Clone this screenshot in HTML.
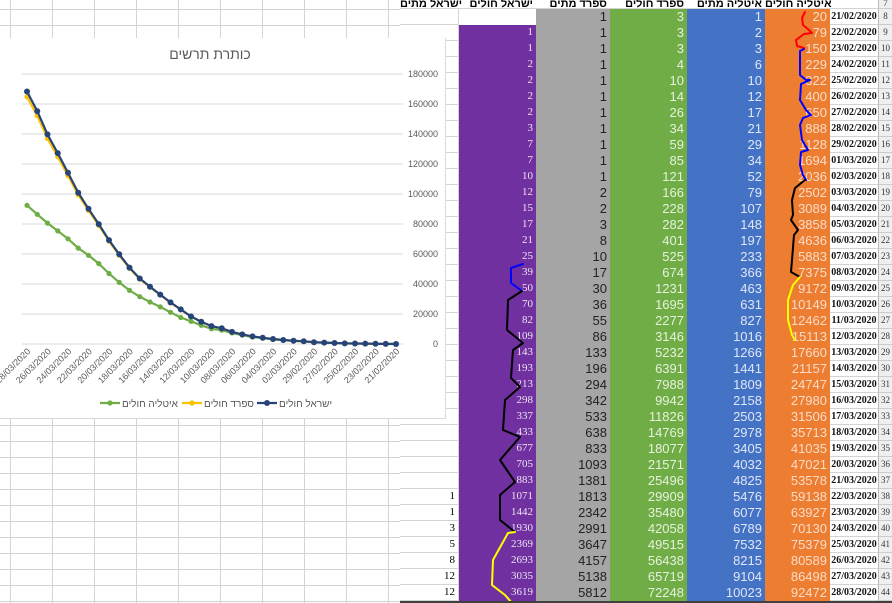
<!DOCTYPE html>
<html><head><meta charset="utf-8"><style>
html,body{margin:0;width:892px;height:603px;overflow:hidden}
body{background:#fff;position:relative;font-family:"Liberation Sans",sans-serif}
.bg{position:absolute;left:0;top:0;width:400px;height:603px;
background-image:linear-gradient(#d4d4d4 1px,transparent 1px),linear-gradient(90deg,#d4d4d4 1px,transparent 1px);
background-size:42px 16px,42px 16px;background-position:0 9px,10px 0}
table{position:absolute;left:400px;top:-7px;border-collapse:separate;border-spacing:0;table-layout:fixed;width:492px}
tr{height:16px}
td{height:16px;max-height:16px;padding:0 3px 0 0;text-align:right;white-space:nowrap;overflow:hidden;line-height:15px;box-sizing:border-box;border-bottom:1px solid transparent}
.h td{background:#fff;border-bottom:1px solid #d4d4d4}
.hd{position:absolute;top:-1px;height:10px;font-size:11px;font-weight:bold;line-height:11px;text-align:right;white-space:nowrap;color:#000;box-sizing:border-box;padding-right:3px}
td.d{font-family:"Liberation Serif",serif;font-size:11px;border-bottom:1px solid #d4d4d4;border-right:1px solid #d4d4d4}
td.p{background:#7030a0;color:#eee4f5;font-family:"Liberation Serif",serif;font-size:11px;border-bottom-color:#7030a0}
td.g{background:#a5a5a5;color:#222;font-size:13px;border-bottom-color:#a5a5a5}
td.gr{background:#70ad47;color:#e6f2dc;font-size:13px;border-bottom-color:#70ad47}
td.b{background:#4472c4;color:#dfe7f6;font-size:13px;border-bottom-color:#4472c4}
td.o{background:#ed7d31;color:#fbdcc6;font-size:13px;border-bottom-color:#ed7d31}
td.dt{font-family:"Liberation Serif",serif;font-size:10px;font-weight:bold;color:#111;text-align:center;padding:0;border-bottom:1px solid #d4d4d4}
td.r{background:#efefef;font-family:"Liberation Serif",serif;font-size:9px;color:#333;text-align:center;padding:0;border-bottom:1px solid #ccc;border-left:1px solid #bbb}
td.e{background:#fff}
.chart{position:absolute;left:0;top:38px;width:445px;height:380px;background:#fff;border-right:1px solid #d9d9d9;border-bottom:1px solid #d9d9d9}
svg{position:absolute;left:0;top:0}
</style></head><body>
<div class="bg"></div>
<table>
<colgroup><col style="width:59px"><col style="width:77px"><col style="width:74px"><col style="width:77px"><col style="width:78px"><col style="width:65px"><col style="width:48px"><col style="width:14px"></colgroup>
<tr class="h"><td></td><td></td><td></td><td></td><td></td><td></td><td></td><td class="r" style="vertical-align:bottom;line-height:9px">7</td></tr>
<tr><td class="d"></td><td class="e"></td><td class="g">1</td><td class="gr">3</td><td class="b">1</td><td class="o">20</td><td class="dt">21/02/2020</td><td class="r">8</td></tr>
<tr><td class="d"></td><td class="p">1</td><td class="g">1</td><td class="gr">3</td><td class="b">2</td><td class="o">79</td><td class="dt">22/02/2020</td><td class="r">9</td></tr>
<tr><td class="d"></td><td class="p">1</td><td class="g">1</td><td class="gr">3</td><td class="b">3</td><td class="o">150</td><td class="dt">23/02/2020</td><td class="r">10</td></tr>
<tr><td class="d"></td><td class="p">2</td><td class="g">1</td><td class="gr">4</td><td class="b">6</td><td class="o">229</td><td class="dt">24/02/2020</td><td class="r">11</td></tr>
<tr><td class="d"></td><td class="p">2</td><td class="g">1</td><td class="gr">10</td><td class="b">10</td><td class="o">322</td><td class="dt">25/02/2020</td><td class="r">12</td></tr>
<tr><td class="d"></td><td class="p">2</td><td class="g">1</td><td class="gr">14</td><td class="b">12</td><td class="o">400</td><td class="dt">26/02/2020</td><td class="r">13</td></tr>
<tr><td class="d"></td><td class="p">2</td><td class="g">1</td><td class="gr">26</td><td class="b">17</td><td class="o">650</td><td class="dt">27/02/2020</td><td class="r">14</td></tr>
<tr><td class="d"></td><td class="p">3</td><td class="g">1</td><td class="gr">34</td><td class="b">21</td><td class="o">888</td><td class="dt">28/02/2020</td><td class="r">15</td></tr>
<tr><td class="d"></td><td class="p">7</td><td class="g">1</td><td class="gr">59</td><td class="b">29</td><td class="o">1128</td><td class="dt">29/02/2020</td><td class="r">16</td></tr>
<tr><td class="d"></td><td class="p">7</td><td class="g">1</td><td class="gr">85</td><td class="b">34</td><td class="o">1694</td><td class="dt">01/03/2020</td><td class="r">17</td></tr>
<tr><td class="d"></td><td class="p">10</td><td class="g">1</td><td class="gr">121</td><td class="b">52</td><td class="o">2036</td><td class="dt">02/03/2020</td><td class="r">18</td></tr>
<tr><td class="d"></td><td class="p">12</td><td class="g">2</td><td class="gr">166</td><td class="b">79</td><td class="o">2502</td><td class="dt">03/03/2020</td><td class="r">19</td></tr>
<tr><td class="d"></td><td class="p">15</td><td class="g">2</td><td class="gr">228</td><td class="b">107</td><td class="o">3089</td><td class="dt">04/03/2020</td><td class="r">20</td></tr>
<tr><td class="d"></td><td class="p">17</td><td class="g">3</td><td class="gr">282</td><td class="b">148</td><td class="o">3858</td><td class="dt">05/03/2020</td><td class="r">21</td></tr>
<tr><td class="d"></td><td class="p">21</td><td class="g">8</td><td class="gr">401</td><td class="b">197</td><td class="o">4636</td><td class="dt">06/03/2020</td><td class="r">22</td></tr>
<tr><td class="d"></td><td class="p">25</td><td class="g">10</td><td class="gr">525</td><td class="b">233</td><td class="o">5883</td><td class="dt">07/03/2020</td><td class="r">23</td></tr>
<tr><td class="d"></td><td class="p">39</td><td class="g">17</td><td class="gr">674</td><td class="b">366</td><td class="o">7375</td><td class="dt">08/03/2020</td><td class="r">24</td></tr>
<tr><td class="d"></td><td class="p">50</td><td class="g">30</td><td class="gr">1231</td><td class="b">463</td><td class="o">9172</td><td class="dt">09/03/2020</td><td class="r">25</td></tr>
<tr><td class="d"></td><td class="p">70</td><td class="g">36</td><td class="gr">1695</td><td class="b">631</td><td class="o">10149</td><td class="dt">10/03/2020</td><td class="r">26</td></tr>
<tr><td class="d"></td><td class="p">82</td><td class="g">55</td><td class="gr">2277</td><td class="b">827</td><td class="o">12462</td><td class="dt">11/03/2020</td><td class="r">27</td></tr>
<tr><td class="d"></td><td class="p">109</td><td class="g">86</td><td class="gr">3146</td><td class="b">1016</td><td class="o">15113</td><td class="dt">12/03/2020</td><td class="r">28</td></tr>
<tr><td class="d"></td><td class="p">143</td><td class="g">133</td><td class="gr">5232</td><td class="b">1266</td><td class="o">17660</td><td class="dt">13/03/2020</td><td class="r">29</td></tr>
<tr><td class="d"></td><td class="p">193</td><td class="g">196</td><td class="gr">6391</td><td class="b">1441</td><td class="o">21157</td><td class="dt">14/03/2020</td><td class="r">30</td></tr>
<tr><td class="d"></td><td class="p">213</td><td class="g">294</td><td class="gr">7988</td><td class="b">1809</td><td class="o">24747</td><td class="dt">15/03/2020</td><td class="r">31</td></tr>
<tr><td class="d"></td><td class="p">298</td><td class="g">342</td><td class="gr">9942</td><td class="b">2158</td><td class="o">27980</td><td class="dt">16/03/2020</td><td class="r">32</td></tr>
<tr><td class="d"></td><td class="p">337</td><td class="g">533</td><td class="gr">11826</td><td class="b">2503</td><td class="o">31506</td><td class="dt">17/03/2020</td><td class="r">33</td></tr>
<tr><td class="d"></td><td class="p">433</td><td class="g">638</td><td class="gr">14769</td><td class="b">2978</td><td class="o">35713</td><td class="dt">18/03/2020</td><td class="r">34</td></tr>
<tr><td class="d"></td><td class="p">677</td><td class="g">833</td><td class="gr">18077</td><td class="b">3405</td><td class="o">41035</td><td class="dt">19/03/2020</td><td class="r">35</td></tr>
<tr><td class="d"></td><td class="p">705</td><td class="g">1093</td><td class="gr">21571</td><td class="b">4032</td><td class="o">47021</td><td class="dt">20/03/2020</td><td class="r">36</td></tr>
<tr><td class="d"></td><td class="p">883</td><td class="g">1381</td><td class="gr">25496</td><td class="b">4825</td><td class="o">53578</td><td class="dt">21/03/2020</td><td class="r">37</td></tr>
<tr><td class="d">1</td><td class="p">1071</td><td class="g">1813</td><td class="gr">29909</td><td class="b">5476</td><td class="o">59138</td><td class="dt">22/03/2020</td><td class="r">38</td></tr>
<tr><td class="d">1</td><td class="p">1442</td><td class="g">2342</td><td class="gr">35480</td><td class="b">6077</td><td class="o">63927</td><td class="dt">23/03/2020</td><td class="r">39</td></tr>
<tr><td class="d">3</td><td class="p">1930</td><td class="g">2991</td><td class="gr">42058</td><td class="b">6789</td><td class="o">70130</td><td class="dt">24/03/2020</td><td class="r">40</td></tr>
<tr><td class="d">5</td><td class="p">2369</td><td class="g">3647</td><td class="gr">49515</td><td class="b">7532</td><td class="o">75379</td><td class="dt">25/03/2020</td><td class="r">41</td></tr>
<tr><td class="d">8</td><td class="p">2693</td><td class="g">4157</td><td class="gr">56438</td><td class="b">8215</td><td class="o">80589</td><td class="dt">26/03/2020</td><td class="r">42</td></tr>
<tr><td class="d">12</td><td class="p">3035</td><td class="g">5138</td><td class="gr">65719</td><td class="b">9104</td><td class="o">86498</td><td class="dt">27/03/2020</td><td class="r">43</td></tr>
<tr><td class="d">12</td><td class="p">3619</td><td class="g">5812</td><td class="gr">72248</td><td class="b">10023</td><td class="o">92472</td><td class="dt">28/03/2020</td><td class="r">44</td></tr>
</table>
<div class="hd" style="left:400px;width:59px">ישראל מתים</div>
<div class="hd" style="left:459px;width:77px">ישראל חולים</div>
<div class="hd" style="left:536px;width:74px">ספרד מתים</div>
<div class="hd" style="left:610px;width:77px">ספרד חולים</div>
<div class="hd" style="left:687px;width:78px">איטליה מתים</div>
<div class="hd" style="left:765px;width:65px">איטליה חולים</div>
<div class="chart"></div>
<svg width="892" height="603" viewBox="0 0 892 603">
<defs>
<marker id="mg" markerWidth="6" markerHeight="6" refX="3" refY="3" markerUnits="userSpaceOnUse"><circle cx="3" cy="3" r="2.6" fill="#70ad47"/></marker>
<marker id="my" markerWidth="6" markerHeight="6" refX="3" refY="3" markerUnits="userSpaceOnUse"><circle cx="3" cy="3" r="2.6" fill="#ffc000"/></marker>
<marker id="md" markerWidth="7" markerHeight="7" refX="3.5" refY="3.5" markerUnits="userSpaceOnUse"><circle cx="3.5" cy="3.5" r="3" fill="#264478"/></marker>
</defs>
<g stroke="#d9d9d9" stroke-width="1">
<line x1="22" x2="403" y1="74" y2="74"/><line x1="22" x2="403" y1="104" y2="104"/><line x1="22" x2="403" y1="134" y2="134"/><line x1="22" x2="403" y1="164" y2="164"/><line x1="22" x2="403" y1="194" y2="194"/><line x1="22" x2="403" y1="224" y2="224"/><line x1="22" x2="403" y1="254" y2="254"/><line x1="22" x2="403" y1="284" y2="284"/><line x1="22" x2="403" y1="314" y2="314"/><line x1="22" x2="403" y1="344" y2="344"/>
</g>
<g font-family="Liberation Sans" font-size="9" fill="#595959" text-anchor="end">
<text x="438" y="77">180000</text><text x="438" y="107">160000</text><text x="438" y="137">140000</text><text x="438" y="167">120000</text><text x="438" y="197">100000</text><text x="438" y="227">80000</text><text x="438" y="257">60000</text><text x="438" y="287">40000</text><text x="438" y="317">20000</text><text x="438" y="347">0</text>
</g>
<text x="210" y="59" font-family="Liberation Sans" font-size="14" fill="#595959" text-anchor="middle">כותרת תרשים</text>
<polyline fill="none" stroke="#70ad47" stroke-width="2.2" marker-start="url(#mg)" marker-mid="url(#mg)" marker-end="url(#mg)" points="27,205.3 37.25,214.3 47.5,223.1 57.75,230.9 68,238.8 78.25,248.1 88.5,255.3 98.75,263.6 109,273.5 119.25,282.4 129.5,290.4 139.75,296.7 150,302 160.25,306.9 170.5,312.3 180.75,317.5 191,321.3 201.25,325.3 211.5,328.8 221.75,330.2 232,332.9 242.25,335.2 252.5,337 262.75,338.2 273,339.4 283.25,340.2 293.5,340.9 303.75,341.5 314,342.3 324.25,342.7 334.5,343 344.75,343.4 355,343.5 365.25,343.7 375.5,343.8 385.75,343.9 396,344"/>
<polyline fill="none" stroke="#ffc000" stroke-width="2.2" marker-start="url(#my)" marker-mid="url(#my)" marker-end="url(#my)" points="27,96.9 37.25,115.7 47.5,138.5 57.75,156.7 68,175.7 78.25,194.9 88.5,210.4 98.75,225.4 109,241.1 119.25,255.3 129.5,268.3 139.75,279 150,287.1 160.25,294.9 170.5,302.7 180.75,309.7 191,316.6 201.25,321.9 211.5,326.2 221.75,328.4 232,331.9 242.25,334.4 252.5,336.4 262.75,337.8 273,339 283.25,340 293.5,340.8 303.75,341.3 314,342.2 324.25,342.6 334.5,343 344.75,343.4 355,343.5 365.25,343.6 375.5,343.8 385.75,343.9 396,344"/>
<polyline fill="none" stroke="#264478" stroke-width="2.2" marker-start="url(#md)" marker-mid="url(#md)" marker-end="url(#md)" points="27,91.5 37.25,111.1 47.5,134.4 57.75,153.1 68,172.8 78.25,192.7 88.5,208.8 98.75,224.1 109,240.1 119.25,254.3 129.5,267.6 139.75,278.5 150,286.7 160.25,294.6 170.5,302.4 180.75,309.4 191,316.4 201.25,321.8 211.5,326.1 221.75,328.3 232,331.9 242.25,334.4 252.5,336.4 262.75,337.8 273,339 283.25,340 293.5,340.7 303.75,341.3 314,342.2 324.25,342.6 334.5,343 344.75,343.4 355,343.5 365.25,343.6 375.5,343.8 385.75,343.9 396,344"/>
<g font-family="Liberation Sans" font-size="9" fill="#595959" text-anchor="end">
<text transform="translate(31,352) rotate(-45)">28/03/2020</text>
<text transform="translate(51.5,352) rotate(-45)">26/03/2020</text>
<text transform="translate(72,352) rotate(-45)">24/03/2020</text>
<text transform="translate(92.5,352) rotate(-45)">22/03/2020</text>
<text transform="translate(113,352) rotate(-45)">20/03/2020</text>
<text transform="translate(133.5,352) rotate(-45)">18/03/2020</text>
<text transform="translate(154,352) rotate(-45)">16/03/2020</text>
<text transform="translate(174.5,352) rotate(-45)">14/03/2020</text>
<text transform="translate(195,352) rotate(-45)">12/03/2020</text>
<text transform="translate(215.5,352) rotate(-45)">10/03/2020</text>
<text transform="translate(236,352) rotate(-45)">08/03/2020</text>
<text transform="translate(256.5,352) rotate(-45)">06/03/2020</text>
<text transform="translate(277,352) rotate(-45)">04/03/2020</text>
<text transform="translate(297.5,352) rotate(-45)">02/03/2020</text>
<text transform="translate(318,352) rotate(-45)">29/02/2020</text>
<text transform="translate(338.5,352) rotate(-45)">27/02/2020</text>
<text transform="translate(359,352) rotate(-45)">25/02/2020</text>
<text transform="translate(379.5,352) rotate(-45)">23/02/2020</text>
<text transform="translate(400,352) rotate(-45)">21/02/2020</text>
</g>
<g font-family="Liberation Sans" font-size="10" fill="#595959">
<line x1="100" x2="120" y1="403" y2="403" stroke="#70ad47" stroke-width="2.2"/><circle cx="110" cy="403" r="2.6" fill="#70ad47"/>
<text x="122" y="407">איטליה חולים</text>
<line x1="182" x2="202" y1="403" y2="403" stroke="#ffc000" stroke-width="2.2"/><circle cx="192" cy="403" r="2.6" fill="#ffc000"/>
<text x="204" y="407">ספרד חולים</text>
<line x1="257" x2="277" y1="403" y2="403" stroke="#264478" stroke-width="2.2"/><circle cx="267" cy="403" r="3" fill="#264478"/>
<text x="279" y="407">ישראל חולים</text>
</g>
<g fill="none" stroke-width="2" stroke-linejoin="round" stroke-linecap="round">
<polyline stroke="#ff0000" points="805,12 802,18 803,25 809,30 812,33 804,34 796,40 797,46 804,48"/>
<polyline stroke="#0000ff" points="804,49 800,51 800,75 806,80 810,80 801,84 800,100 806,110 811,115 803,118 800,125 802,140 808,150 801,152 800,165 803,175 806,180"/>
<polyline stroke="#000" points="805,180 795,188 792,200 793,215 791,220 798,230 794,235 792,260 791,272 800,277"/>
<polyline stroke="#ffff00" points="800,277 793,285 788,300 788,320 792,335 795,340"/>
<polyline stroke="#0000ff" points="523,264 511,268 511,283 522,291"/>
<polyline stroke="#000" points="522,291 508,300 507,330 523,343 513,350 511,378 520,387 505,400 503,430 520,437 500,460 515,482 500,495 500,520 515,532"/>
<polyline stroke="#ffff00" points="515,532 508,533 493,560 492,585 505,595 512,603"/>
</g>
<line x1="400" x2="892" y1="602" y2="602" stroke="#000" stroke-width="1.5"/>
</svg>
</body></html>
